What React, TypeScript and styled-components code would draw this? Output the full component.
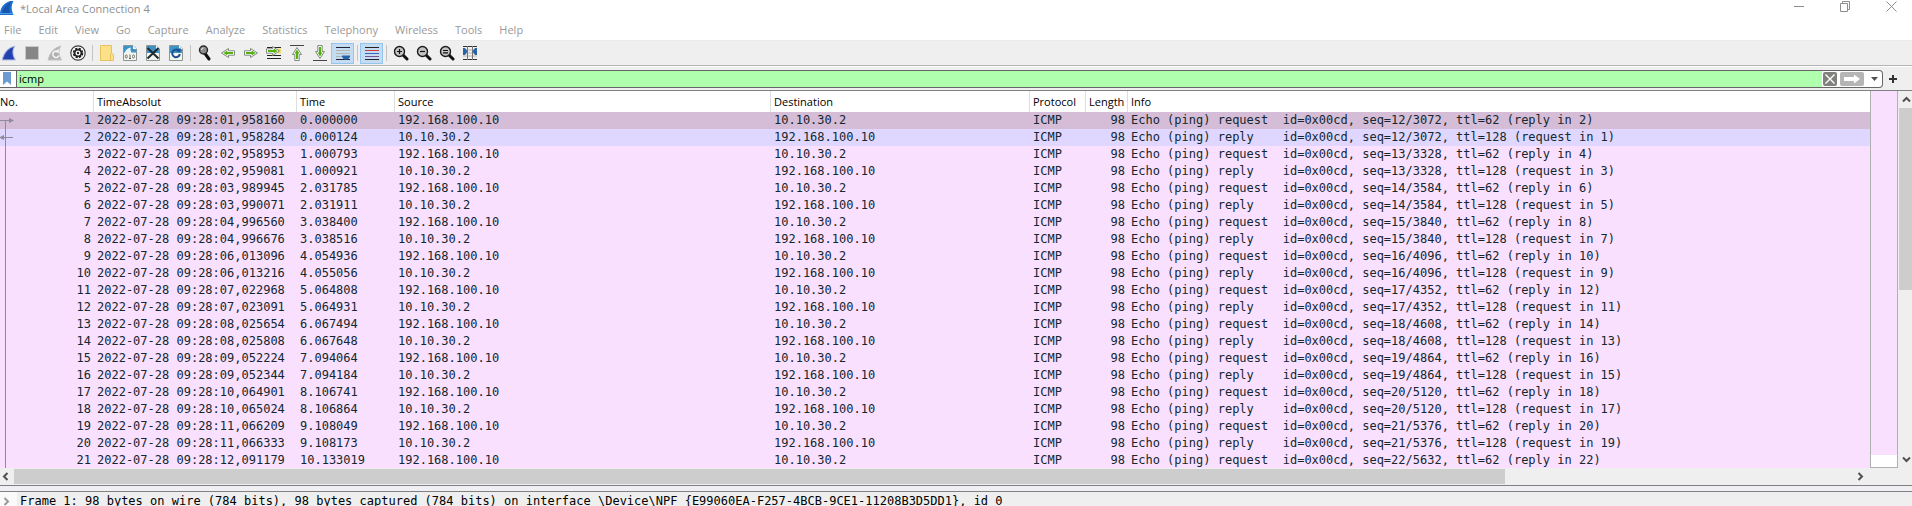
import React from "react";
import styled, { createGlobalStyle, css } from "styled-components";

const ui = `"Open Sans", "Noto Sans", sans-serif`;
const mono = `"DejaVu Sans Mono", "Liberation Mono", monospace`;

const GlobalStyle = createGlobalStyle`
  * { box-sizing: border-box; }
  body { margin: 0; background: #fff; overflow: hidden; font-family: ${ui}; font-size: 11px; color: #000; }
  button { font: inherit; color: inherit; border: 0; padding: 0; margin: 0; background: none; }
`;

const Window = styled.main`
  display: flex;
  flex-direction: column;
  height: 100vh;
`;

const TitleBar = styled.header`
  display: flex;
  justify-content: space-between;
  height: 17px;
  color: #8e8e8e;
`;

const Title = styled.h1`
  display: flex;
  align-items: center;
  gap: 5px;
  margin: 0;
  font-size: 11px;
  font-weight: 400;
  line-height: 16px;
  white-space: nowrap;
`;

const WindowControls = styled.div`
  display: flex;
  padding-right: 9px;
  gap: 22px;
`;

const ControlButton = styled.button`
  display: grid;
  place-items: center;
  width: 24px;
  height: 13px;
`;

const MenuBar = styled.nav`
  display: flex;
  align-items: center;
  height: 24px;
  padding: 2px 0 0 4px;
  gap: 17px;
  color: #999;
  border-bottom: 1px solid #ebebeb;
`;

const MenuButton = styled.button`
  line-height: 16px;
`;

const ToolBar = styled.div`
  display: flex;
  align-items: center;
  height: 25px;
  background: #efefef;
  border-bottom: 1px solid #b4b4b4;
`;

const ToolGroup = styled.div`
  display: flex;
  align-items: center;
  margin-left: -3px;
`;

const ToolButton = styled.button<{ $on?: boolean }>`
  display: grid;
  place-items: center;
  width: 23px;
  height: 21px;
  ${(p) => p.$on && css`
    background: #c3dcf2;
    border: 1px solid #93c5ee;
  `}
`;

const ToolSeparator = styled.span`
  width: 1px;
  height: 16px;
  margin: 0 2px 0 3px;
  background: #c4c4c4;
`;

const FilterBar = styled.form`
  display: flex;
  align-items: center;
  height: 25px;
  background: #efefef;
  border-top: 1px solid #fff;
  border-bottom: 1px solid #7f7f84;
`;

const FilterField = styled.div`
  display: flex;
  flex: 1;
  align-items: center;
  height: 18px;
  background: #fff;
  border: 1px solid #666;
  border-left: 0;
  border-radius: 0 4px 4px 0;
`;

const Bookmark = styled.button`
  display: grid;
  place-items: center;
  width: 17px;
  height: 16px;
  padding-right: 2px;
  border-right: 1px solid #666;
`;

const FilterInput = styled.input`
  flex: 1;
  min-width: 0;
  height: 16px;
  padding: 0 2px;
  border: 0;
  outline: 0;
  background: #afffaf;
  color: #000;
  font-family: ${ui};
  font-size: 11px;
`;

const FilterAction = styled.button<{ $width: number; $tone: string }>`
  display: grid;
  place-items: center;
  width: ${(p) => p.$width}px;
  height: 14px;
  margin-left: 1px;
  margin-right: 2px;
  border-radius: 2px;
  background: ${(p) => p.$tone};
`;

const FilterDrop = styled.button`
  display: grid;
  place-items: center;
  width: 16px;
  height: 16px;
`;

const AddFilter = styled.button`
  display: grid;
  place-items: center;
  width: 20px;
  height: 18px;
  margin-right: 9px;
`;

const PacketPane = styled.section`
  display: flex;
  flex: none;
  background: #efefef;
`;

const PacketMain = styled.div`
  flex: 1;
  min-width: 0;
  height: 377px;
  overflow: hidden;
  background: #fff;
`;

const PacketTable = styled.table`
  width: 100%;
  table-layout: fixed;
  border-collapse: separate;
  border-spacing: 0;
  white-space: pre;
`;

const Col = styled.col<{ $width?: number }>`
  width: ${(p) => (p.$width ? p.$width + "px" : "auto")};
`;

const HeadCell = styled.th<{ $flush?: boolean; $last?: boolean }>`
  height: 21px;
  padding: 0 0 0 ${(p) => (p.$flush ? 0 : 3)}px;
  text-align: left;
  font-family: ${ui};
  font-size: 11px;
  font-weight: 400;
  line-height: 21px;
  border-right: ${(p) => (p.$last ? "0" : "1px solid #dedede")};
`;

const Row = styled.tr<{ $tone: string }>`
  height: 17px;
  background: ${(p) => p.$tone};
`;

const Cell = styled.td<{ $right?: boolean }>`
  height: 17px;
  padding: 0 3px;
  text-align: ${(p) => (p.$right ? "right" : "left")};
  font-family: ${mono};
  font-size: 12px;
  line-height: 17px;
  color: #12272e;
`;

const NumberCell = styled(Cell)`
  padding-left: 0;
`;

const NumberContent = styled.div`
  display: flex;
  justify-content: space-between;
  height: 17px;
`;

const MiniMap = styled.div`
  width: 28px;
  border: 1px solid #b0b0b0;
  border-top: 0;
  background: linear-gradient(#fae0ff, #fae0ff) 0 0 / 100% 364px no-repeat #fff;
`;

const VerticalScroll = styled.div`
  display: flex;
  flex-direction: column;
  width: 14px;
  padding-left: 1px;
`;

const ScrollArrow = styled.button`
  display: grid;
  place-items: center;
  width: 14px;
  height: 17px;
`;

const VerticalTrack = styled.div`
  flex: 1;
`;

const VerticalThumb = styled.div`
  height: 53%;
  background: #cdcdcd;
`;

const HorizontalScroll = styled.div`
  display: flex;
  flex: none;
  height: 18px;
  padding: 1px 43px 1px 0;
  background: #efefef;
  border-bottom: 1px solid #808080;
`;

const HorizontalTrack = styled.div`
  flex: 1;
`;

const HorizontalThumb = styled.div`
  width: 81%;
  height: 15px;
  background: #cdcdcd;
`;

const HorizontalArrow = styled(ScrollArrow)`
  height: 15px;
  padding-right: 3px;
`;

const DetailPane = styled.section`
  flex: 1;
  min-height: 0;
  margin-top: 5px;
  border-top: 1px solid #808080;
  background: #efefef;
  overflow: hidden;
`;

const Splitter = styled.div`
  display: flex;
  flex: 1;
  flex-direction: column;
  min-height: 0;
  background: #f0eff4;
`;

const DetailRow = styled.div`
  display: flex;
  height: 18px;
  font-family: ${mono};
  font-size: 12px;
  line-height: 18px;
  white-space: pre;
`;

const Expander = styled.button`
  display: grid;
  place-items: center;
  width: 17px;
  height: 18px;
  padding-right: 4px;
  background: #fafafa;
`;

const DetailText = styled.span`
  padding-left: 3px;
`;

/* ---------- icons ---------- */

const Svg = ({ w = 16, h = 16, children }: { w?: number; h?: number; children: React.ReactNode }) => (
  <svg width={w} height={h} viewBox={`0 0 ${w} ${h}`} fill="none" aria-hidden="true">
    {children}
  </svg>
);

const finShape = "M1 15C3 8 6 3 14 1C11 5 11.500 10 14.500 15Z";

const LogoIcon = () => (
  <Svg w={15}>
    <path d="M0 14C0 6 4 1 14 -1C11 4 11 9 13.500 14Z" fill="#1f6fd0" />
    <path d="M2 13C3 7 6 3 11 1C9 5 9 9 10 13Z" fill="#1656ad" />
    <path d="M0 12.500H13" stroke="#48a1e8" />
  </Svg>
);

const StartIcon = () => (
  <Svg>
    <path d={finShape} fill="#2c4fc0" stroke="#b9c0dc" />
    <path d="M3 14C5 9 7 5 12 2.500C10 6 10 10 12.500 14Z" fill="#2340ae" />
  </Svg>
);

const StopIcon = () => (
  <Svg>
    <rect x="1.500" y="1.500" width="13" height="13" fill="#868686" stroke="#c9c9c9" />
  </Svg>
);

const RestartIcon = () => (
  <Svg>
    <path d={finShape} fill="#b1b1b1" stroke="#c4c4c4" />
    <path d="M10.500 6.500A3.200 3.200 0 1 0 12 10.500" stroke="#f3f3f3" strokeWidth="1.600" />
    <path d="M8 7L11.500 3.500L12 8Z" fill="#f3f3f3" />
  </Svg>
);

const OptionsIcon = () => (
  <Svg>
    <circle cx="8" cy="8" r="7.200" fill="#fff" stroke="#3c3c3c" strokeWidth="1.200" />
    <circle cx="8" cy="8" r="4.300" stroke="#222" strokeWidth="2" strokeDasharray="2.300 1.080" />
    <circle cx="8" cy="8" r="3.300" stroke="#222" strokeWidth="1.600" />
    <circle cx="8" cy="8" r="1.200" fill="#222" />
  </Svg>
);

const FolderIcon = () => (
  <Svg>
    <path d="M1.500 0.500H12.500V8.500L14.500 9.500V15.500H1.500Z" fill="#fde08a" stroke="#e6c25e" />
    <path d="M11.500 9V15.500" stroke="#e6c25e" />
  </Svg>
);

const FileBase = () => (
  <>
    <path d="M1.500 0.500H11L14.500 4V15.500H1.500Z" fill="#f4f5ec" stroke="#8a9496" />
    <path d="M2 1H10.800L14 4.200V8H2Z" fill="#3d93c6" />
    <path d="M11 0.500V4H14.500Z" fill="#fff" />
  </>
);

const SaveIcon = () => (
  <Svg>
    <FileBase />
    <path d="M3 7C4 4.500 6 3 9 2.500C8 4 8.500 6 9.500 7.500H14V8H2Z" fill="#e9f5fb" />
    <ellipse cx="4.300" cy="11.500" rx="1" ry="1.600" stroke="#555" strokeWidth="0.800" />
    <path d="M8 9.500V13.500M7 13.500H9" stroke="#555" strokeWidth="0.900" />
    <ellipse cx="11.500" cy="11.500" rx="1" ry="1.600" stroke="#555" strokeWidth="0.800" />
  </Svg>
);

const CloseFileIcon = () => (
  <Svg>
    <FileBase />
    <path d="M2.500 3L13.500 13.500M13.500 3L2.500 13.500" stroke="#1d2830" strokeWidth="2" />
  </Svg>
);

const ReloadIcon = () => (
  <Svg>
    <FileBase />
    <path d="M10.500 5.500A3.800 3.800 0 1 0 11.800 9" stroke="#1d4f91" strokeWidth="2" />
    <path d="M8 6.500L12.500 7V2.500Z" fill="#1d4f91" />
  </Svg>
);

const FindIcon = () => (
  <Svg>
    <path d="M8 8.500L12 14" stroke="#111" strokeWidth="3" strokeLinecap="round" />
    <circle cx="6.500" cy="5" r="4" fill="#8d8d8d" stroke="#2b2b2b" strokeWidth="1.400" />
    <path d="M4.500 5A2 2 0 0 1 6.500 3" stroke="#eee" />
  </Svg>
);

const ArrowShape = () => (
  <>
    <path
      d="M1.500 5.800H7.500V3.500L14.500 8L7.500 12.500V10.200H1.500Z"
      fill="#fff"
      stroke="#7f8a7c"
      strokeLinejoin="round"
    />
    <path d="M3 6.900H8.600V5.500L12.600 8L8.600 10.500V9.100H3Z" fill="#56b010" />
  </>
);

const GreenArrow = ({ turn = 0, shift = 0, bar }: { turn?: number; shift?: number; bar?: string }) => (
  <Svg>
    {bar && <path d={bar} stroke="#444" />}
    <g transform={`translate(0 ${shift}) rotate(${turn} 8 8)`}>
      <ArrowShape />
    </g>
  </Svg>
);

const GoToIcon = () => (
  <Svg>
    <path d="M1 2.500H15M1 10.500H15M1 13.500H15" stroke="#222" />
    <path d="M12 6H15" stroke="#f1dc6a" strokeWidth="5" />
    <g transform="translate(-1 -2)">
      <ArrowShape />
    </g>
  </Svg>
);

const AutoScrollIcon = () => (
  <Svg>
    <path d="M1 2.500H15M1 14.500H15" stroke="#223" />
    <path d="M1 5.500H15M1 8.500H15" stroke="#b4b8a8" />
    <path d="M1 11.500H15" stroke="#a9b5b5" />
    <path d="M7 10.500H15V12L13 14.500H9L7 12Z" fill="#2a62a8" />
  </Svg>
);

const ColorizeIcon = () => (
  <Svg>
    <path d="M1 2.500H15M1 14.500H15" stroke="#222" />
    <path d="M1 5.500H15" stroke="#d23b3b" />
    <path d="M1 8.500H15" stroke="#3b62b4" />
    <path d="M1 11.500H15" stroke="#7a4f8f" />
  </Svg>
);

const ZoomIcon = ({ mark }: { mark: string }) => (
  <Svg>
    <path d="M10 10L14 14" stroke="#111" strokeWidth="3" strokeLinecap="round" />
    <circle cx="6.500" cy="6.500" r="5" fill="#c4c4c4" stroke="#1c1c1c" strokeWidth="1.400" />
    <path d={mark} stroke="#111" strokeWidth="1.200" />
  </Svg>
);

const ResizeIcon = () => (
  <Svg>
    <path d="M1 1.500H15M1 14.500H15" stroke="#333" />
    <path d="M1 5H15M1 8H15M1 11H15" stroke="#b5b5ae" />
    <path d="M5.500 1V15M10.500 1V15" stroke="#777" />
    <path d="M1 3H3L5.500 6.500L3 10H1Z" fill="#2a62a8" />
    <path d="M15 3H13L10.500 6.500L13 10H15Z" fill="#2a62a8" />
  </Svg>
);

const Chevron = ({ d, tone = "#505050" }: { d: string; tone?: string }) => (
  <Svg w={9} h={9}>
    <path d={d} stroke={tone} strokeWidth="2" />
  </Svg>
);

const Relation = ({ row }: { row: number }) => (
  <Svg w={14} h={17}>
    <path d={row === 1 ? "M5.500 8V17" : "M5.500 0V17"} stroke="#8c8a9c" />
    {row === 1 && (
      <>
        <path d="M0 8.500H10" stroke="#8c8a9c" />
        <path d="M9 6L14 8.500L9 11Z" fill="#8c8a9c" />
      </>
    )}
    {row === 2 && (
      <>
        <path d="M3 8.500H13" stroke="#8c8a9c" />
        <path d="M4 6L-1 8.500L4 11Z" fill="#8c8a9c" />
      </>
    )}
  </Svg>
);

/* ---------- data ---------- */

const menus = ["File", "Edit", "View", "Go", "Capture", "Analyze", "Statistics", "Telephony", "Wireless", "Tools", "Help"];

type Tool = { label: string; icon: React.ReactNode; on?: boolean } | null;

const tools: Tool[] = [
  { label: "Start capture", icon: <StartIcon /> },
  { label: "Stop capture", icon: <StopIcon /> },
  { label: "Restart capture", icon: <RestartIcon /> },
  { label: "Capture options", icon: <OptionsIcon /> },
  null,
  { label: "Open file", icon: <FolderIcon /> },
  { label: "Save file", icon: <SaveIcon /> },
  { label: "Close file", icon: <CloseFileIcon /> },
  { label: "Reload file", icon: <ReloadIcon /> },
  null,
  { label: "Find packet", icon: <FindIcon /> },
  { label: "Previous packet", icon: <GreenArrow turn={180} /> },
  { label: "Next packet", icon: <GreenArrow /> },
  { label: "Go to packet", icon: <GoToIcon /> },
  { label: "First packet", icon: <GreenArrow turn={-90} shift={1} bar="M1 0.500H15" /> },
  { label: "Last packet", icon: <GreenArrow turn={90} shift={-1} bar="M1 15.500H15" /> },
  { label: "Auto scroll", icon: <AutoScrollIcon />, on: true },
  null,
  { label: "Colorize", icon: <ColorizeIcon />, on: true },
  null,
  { label: "Zoom in", icon: <ZoomIcon mark="M4 6.500H9M6.500 4V9" /> },
  { label: "Zoom out", icon: <ZoomIcon mark="M4 6.500H9" /> },
  { label: "Normal size", icon: <ZoomIcon mark="M4 5.500H9M4 7.800H9" /> },
  { label: "Resize columns", icon: <ResizeIcon /> },
];

const columns: { name: string; width?: number }[] = [
  { name: "No.", width: 94 },
  { name: "TimeAbsolut", width: 203 },
  { name: "Time", width: 98 },
  { name: "Source", width: 376 },
  { name: "Destination", width: 259 },
  { name: "Protocol", width: 56 },
  { name: "Length", width: 42 },
  { name: "Info" },
];

const times: [string, string][] = [
  ["01,958160", "0.000000"],
  ["01,958284", "0.000124"],
  ["02,958953", "1.000793"],
  ["02,959081", "1.000921"],
  ["03,989945", "2.031785"],
  ["03,990071", "2.031911"],
  ["04,996560", "3.038400"],
  ["04,996676", "3.038516"],
  ["06,013096", "4.054936"],
  ["06,013216", "4.055056"],
  ["07,022968", "5.064808"],
  ["07,023091", "5.064931"],
  ["08,025654", "6.067494"],
  ["08,025808", "6.067648"],
  ["09,052224", "7.094064"],
  ["09,052344", "7.094184"],
  ["10,064901", "8.106741"],
  ["10,065024", "8.106864"],
  ["11,066209", "9.108049"],
  ["11,066333", "9.108173"],
  ["12,091179", "10.133019"],
];

const client = "192.168.100.10";
const server = "10.10.30.2";

const packets = times.map(([clock, elapsed], i) => {
  const no = i + 1;
  const request = i % 2 === 0;
  const seq = 12 + Math.floor(i / 2);
  const ids = `id=0x00cd, seq=${seq}/${seq * 256}`;
  return {
    no,
    absolute: `2022-07-28 09:28:${clock}`,
    elapsed,
    source: request ? client : server,
    destination: request ? server : client,
    info: request
      ? `Echo (ping) request  ${ids}, ttl=62 (reply in ${no + 1})`
      : `Echo (ping) reply    ${ids}, ttl=128 (request in ${no - 1})`,
  };
});

const rowTone = (no: number) => (no === 1 ? "#d5bdd8" : no === 2 ? "#dfd7ff" : "#fae0ff");

export default function App() {
  return (
    <Window>
      <GlobalStyle />
      <TitleBar>
        <Title>
          <LogoIcon />
          *Local Area Connection 4
        </Title>
        <WindowControls>
          <ControlButton aria-label="Minimize">
            <Svg w={11} h={11}><path d="M0 5.500H10" stroke="#8e8e8e" /></Svg>
          </ControlButton>
          <ControlButton aria-label="Restore">
            <Svg w={11} h={11}><path d="M0.500 2.500H7.500V10.500H0.500ZM2.500 2V0.500H9.500V8.500H8" stroke="#8e8e8e" /></Svg>
          </ControlButton>
          <ControlButton aria-label="Close">
            <Svg w={11} h={11}><path d="M0.500 0.500L10.500 10.500M10.500 0.500L0.500 10.500" stroke="#8e8e8e" /></Svg>
          </ControlButton>
        </WindowControls>
      </TitleBar>

      <MenuBar>
        {menus.map((m) => <MenuButton key={m}>{m}</MenuButton>)}
      </MenuBar>

      <ToolBar>
        <ToolGroup>
          {tools.map((t, i) =>
            t ? (
              <ToolButton key={i} aria-label={t.label} $on={t.on}>{t.icon}</ToolButton>
            ) : (
              <ToolSeparator key={i} />
            )
          )}
        </ToolGroup>
      </ToolBar>

      <FilterBar onSubmit={(e) => e.preventDefault()}>
        <FilterField>
          <Bookmark type="button" aria-label="Bookmark filter">
            <Svg w={8} h={13}><path d="M0 0H8V13L4 9.500L0 13Z" fill="#6c9bd2" /></Svg>
          </Bookmark>
          <FilterInput aria-label="Display filter" defaultValue="icmp" />
          <FilterAction type="button" aria-label="Clear filter" $width={14} $tone="#80807c">
            <Svg w={10} h={10}><path d="M0.500 0.500L9.500 9.500M9.500 0.500L0.500 9.500" stroke="#fff" strokeWidth="1.400" /></Svg>
          </FilterAction>
          <FilterAction type="submit" aria-label="Apply filter" $width={24} $tone="#b5b5b5">
            <Svg w={16} h={10}><path d="M0 3H10V0.500L16 5L10 9.500V7H0Z" fill="#fff" /></Svg>
          </FilterAction>
          <FilterDrop type="button" aria-label="Filter history">
            <Svg w={7} h={4}><path d="M0 0H7L3.500 4Z" fill="#505050" /></Svg>
          </FilterDrop>
        </FilterField>
        <AddFilter type="button" aria-label="Add filter button">
          <Svg w={8} h={8}><path d="M0 4H8M4 0V8" stroke="#333" strokeWidth="2" /></Svg>
        </AddFilter>
      </FilterBar>

      <PacketPane>
        <PacketMain>
          <PacketTable>
            <colgroup>
              {columns.map((c) => <Col key={c.name} $width={c.width} />)}
            </colgroup>
            <thead>
              <tr>
                {columns.map((c, i) => (
                  <HeadCell key={c.name} scope="col" $flush={i === 0} $last={!c.width}>{c.name}</HeadCell>
                ))}
              </tr>
            </thead>
            <tbody>
              {packets.map((p) => (
                <Row key={p.no} $tone={rowTone(p.no)}>
                  <NumberCell>
                    <NumberContent>
                      <Relation row={p.no} />
                      {p.no}
                    </NumberContent>
                  </NumberCell>
                  <Cell>{p.absolute}</Cell>
                  <Cell>{p.elapsed}</Cell>
                  <Cell>{p.source}</Cell>
                  <Cell>{p.destination}</Cell>
                  <Cell>ICMP</Cell>
                  <Cell $right>98</Cell>
                  <Cell>{p.info}</Cell>
                </Row>
              ))}
            </tbody>
          </PacketTable>
        </PacketMain>
        <MiniMap />
        <VerticalScroll>
          <ScrollArrow aria-label="Scroll up"><Chevron d="M1 6.500L4.500 3L8 6.500" /></ScrollArrow>
          <VerticalTrack><VerticalThumb /></VerticalTrack>
          <ScrollArrow aria-label="Scroll down"><Chevron d="M1 2.500L4.500 6L8 2.500" /></ScrollArrow>
        </VerticalScroll>
      </PacketPane>

      <HorizontalScroll>
        <HorizontalArrow aria-label="Scroll left"><Chevron d="M6.500 1L3 4.500L6.500 8" /></HorizontalArrow>
        <HorizontalTrack><HorizontalThumb /></HorizontalTrack>
        <HorizontalArrow aria-label="Scroll right"><Chevron d="M2.500 1L6 4.500L2.500 8" /></HorizontalArrow>
      </HorizontalScroll>

      <Splitter>
        <DetailPane>
          <DetailRow>
            <Expander aria-label="Expand frame"><Chevron d="M2.500 1L6 4.500L2.500 8" tone="#9a9a9a" /></Expander>
            <DetailText>
              {"Frame 1: 98 bytes on wire (784 bits), 98 bytes captured (784 bits) on interface \\Device\\NPF_{E99060EA-F257-4BCB-9CE1-11208B3D5DD1}, id 0"}
            </DetailText>
          </DetailRow>
        </DetailPane>
      </Splitter>
    </Window>
  );
}
